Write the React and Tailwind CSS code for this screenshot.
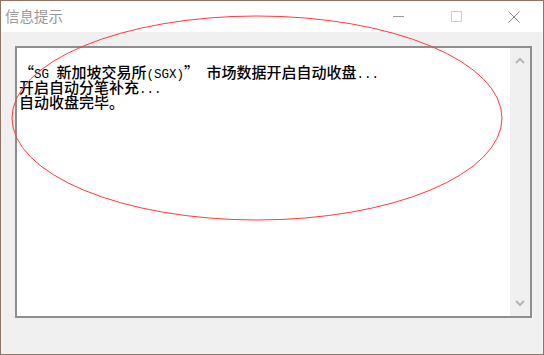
export default function App() {
  const cjk = { fontFamily: '"Noto Sans CJK SC", "Liberation Sans", sans-serif' };
  const A = ({ children }) => (
    <span className="text-[12.5px] leading-[15px]" style={{ fontFamily: '"Liberation Mono", monospace' }}>{children}</span>
  );
  return (
    <div className="relative w-[544px] h-[355px] overflow-hidden bg-[#f0f0f0] border border-[#8f7565] flex flex-col">
      <div className="h-[31px] bg-white flex items-center shrink-0">
        <div className="pl-[4px] text-[14.5px] text-[#999999] leading-none flex-1" style={cjk}>信息提示</div>
        <div className="flex h-full">
          <div className="w-[58px] h-full flex items-center justify-center">
            <div className="w-[11px] h-px bg-[#9a9a9a]"></div>
          </div>
          <div className="w-[58px] h-full flex items-center justify-center">
            <div className="w-[11px] h-[11px] border border-[#cfcfcf]"></div>
          </div>
          <div className="w-[58px] h-full flex items-center justify-center">
            <svg width="12" height="12" viewBox="0 0 12 12">
              <path d="M0.5 0.5 L11.5 11.5 M11.5 0.5 L0.5 11.5" stroke="#8a8a8a" strokeWidth="1" fill="none" />
            </svg>
          </div>
        </div>
      </div>
      <div className="pl-[14px] pt-[14px]">
        <div className="w-[517px] h-[272px] border-2 border-[#8e8e8e] bg-white flex">
          <div className="flex-1 pl-[2px] pt-[16px] text-[15px] leading-[15px] text-black font-medium" style={cjk}>
            <div className="h-[15px] whitespace-nowrap flex items-baseline">
              <span>“</span><A>SG&nbsp;</A><span>新加坡交易所</span><A>(SGX)</A><span>”</span><A>&nbsp;</A><span>市场数据开启自动收盘</span><A>...</A>
            </div>
            <div className="h-[15px] whitespace-nowrap flex items-baseline">
              <span>开启自动分笔补充</span><A>...</A>
            </div>
            <div className="h-[15px] whitespace-nowrap flex items-baseline">
              <span>自动收盘完毕。</span>
            </div>
          </div>
          <div className="w-[20px] h-full bg-[#f0f0f0] flex flex-col items-center justify-between py-[9px]">
            <svg width="10" height="7" viewBox="0 0 10 7">
              <path d="M1 6 L5 2 L9 6" stroke="#b5b5b5" strokeWidth="2" fill="none" />
            </svg>
            <svg width="10" height="7" viewBox="0 0 10 7">
              <path d="M1 1 L5 5 L9 1" stroke="#b5b5b5" strokeWidth="2" fill="none" />
            </svg>
          </div>
        </div>
      </div>
      <svg className="absolute left-0 top-0 pointer-events-none" width="544" height="355">
        <ellipse cx="256" cy="117" rx="245" ry="102" stroke="#ff3b3b" strokeWidth="1" fill="none" />
      </svg>
    </div>
  );
}
